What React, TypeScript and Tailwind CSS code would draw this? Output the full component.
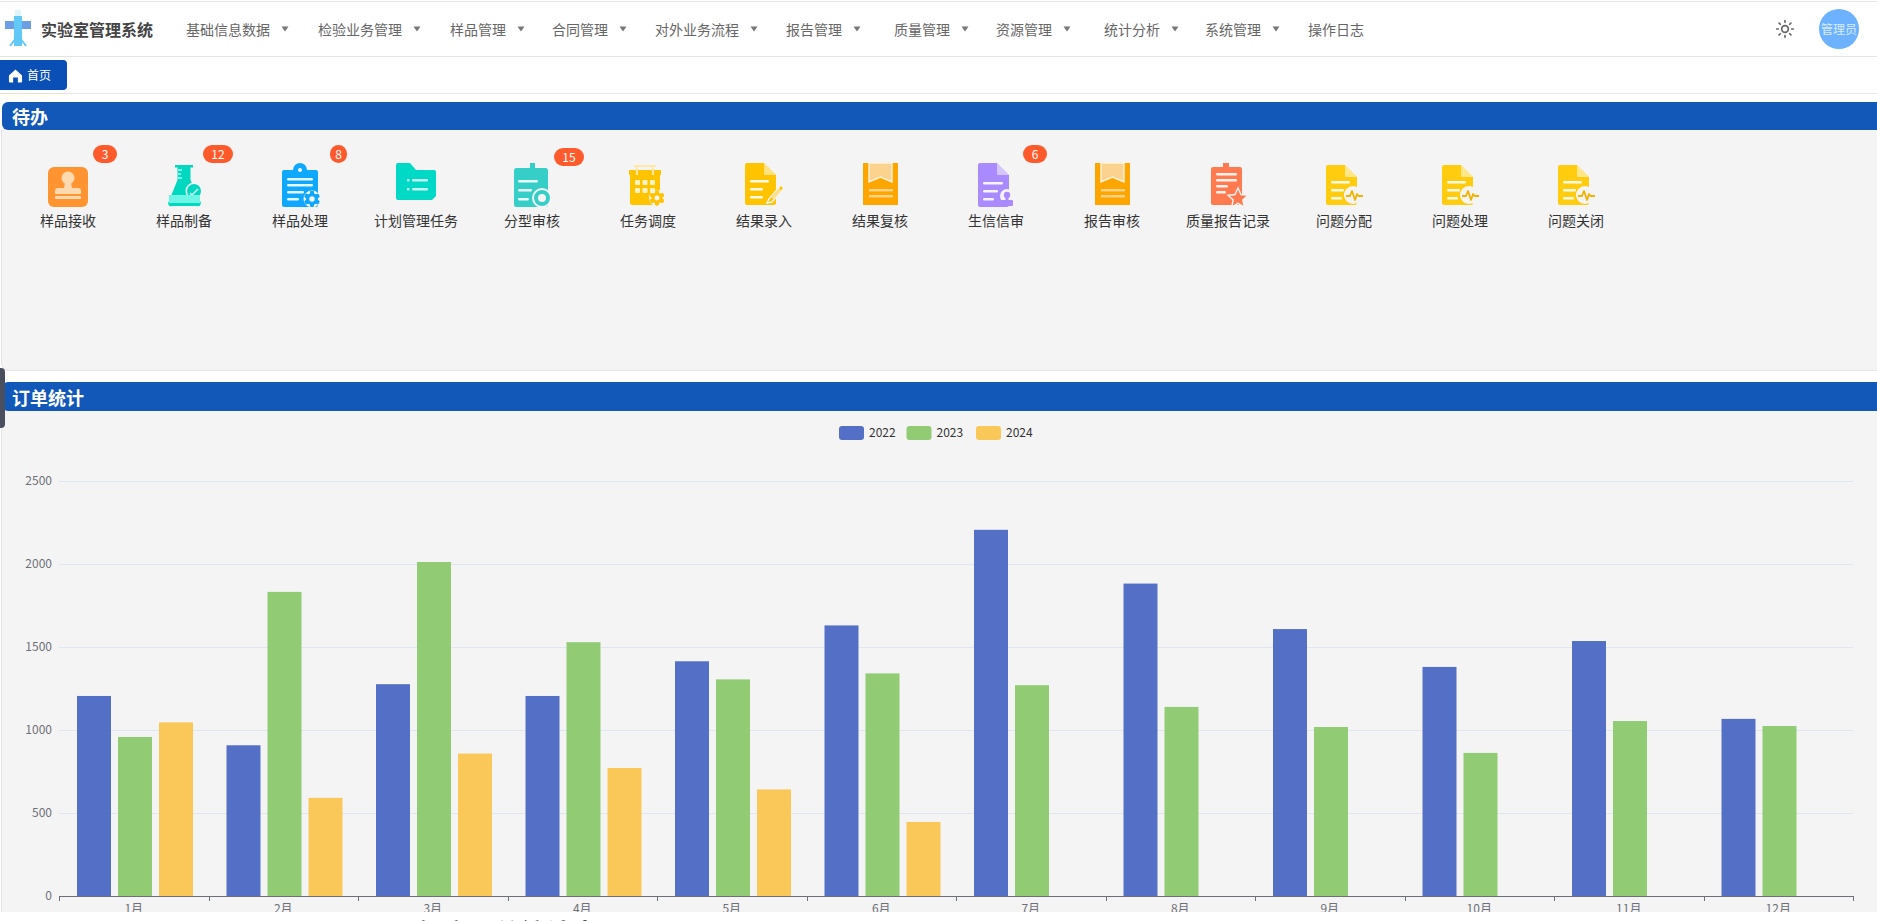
import React from "react";
import { Sun } from "lucide-react";

const FONT = '"Noto Sans CJK SC", "Noto Sans", sans-serif';

const NAV = [
  { label: "基础信息数据", caret: true, cls: "w-[132px]" },
  { label: "检验业务管理", caret: true, cls: "w-[132px]" },
  { label: "样品管理", caret: true, cls: "w-[102px]" },
  { label: "合同管理", caret: true, cls: "w-[103px]" },
  { label: "对外业务流程", caret: true, cls: "w-[131px]" },
  { label: "报告管理", caret: true, cls: "w-[108px]" },
  { label: "质量管理", caret: true, cls: "w-[102px]" },
  { label: "资源管理", caret: true, cls: "w-[108px]" },
  { label: "统计分析", caret: true, cls: "w-[101px]" },
  { label: "系统管理", caret: true, cls: "w-[103px]" },
  { label: "操作日志", caret: false, cls: "w-[60px]" },
];

function Caret() {
  return (
    <svg width="8" height="6" viewBox="0 0 8 6" className="ml-[11px]">
      <path d="M0.5 0.5h7L4 5.5z" fill="#777" />
    </svg>
  );
}

function DocBase({ color, x, y, w, h, fold = 12 }: { color: string; x: number; y: number; w: number; h: number; fold?: number }) {
  return (
    <>
      <path
        d={`M${x + 2} ${y}h${w - fold - 2}l${fold} ${fold}v${h - fold - 2}a2 2 0 0 1-2 2h-${w - 4}a2 2 0 0 1-2-2v-${h - 4}a2 2 0 0 1 2-2z`}
        fill={color}
      />
      <path d={`M${x + w - fold} ${y}l${fold} ${fold}h-${fold - 1}a1 1 0 0 1-1-1z`} fill="#fff" fillOpacity="0.5" />
    </>
  );
}

function Lines({ x, ys, ws }: { x: number; ys: number[]; ws: number[] }) {
  return (
    <>
      {ys.map((y, i) => (
        <rect key={y} x={x} y={y} width={ws[i]} height="2.4" rx="1.2" fill="#fff" fillOpacity="0.9" />
      ))}
    </>
  );
}

function Gear({ cx, cy, color, r = 6 }: { cx: number; cy: number; color: string; r?: number }) {
  const teeth = [0, 60, 120, 180, 240, 300];
  return (
    <g>
      <circle cx={cx} cy={cy} r={r + 2.5} fill="#f4f4f4" />
      {teeth.map((a) => (
        <rect key={a} x={cx - 2} y={cy - r - 2} width="4" height={r * 2 + 4} rx="1.4" fill={color} transform={`rotate(${a} ${cx} ${cy})`} />
      ))}
      <circle cx={cx} cy={cy} r={r} fill={color} />
      <circle cx={cx} cy={cy} r={r * 0.45} fill="#f4f4f4" />
    </g>
  );
}

function Pulse({ cx, cy, color }: { cx: number; cy: number; color: string }) {
  return (
    <g>
      <circle cx={cx - 1} cy={cy} r="9" fill="#f4f4f4" />
      <path d={`M${cx - 8} ${cy + 1}h4l2 -5l3 9l2 -6l1.5 2h4.5`} fill="none" stroke={color} strokeWidth="1.8" strokeLinejoin="round" />
    </g>
  );
}

// One drawing per task entry, all in a 48 x 48 box
const ICONS: Record<string, React.ReactNode> = {
  stamp: (
    <>
      <rect x="4" y="7" width="40" height="40" rx="6" fill="#ff9430" />
      <circle cx="24" cy="18" r="6.5" fill="#ffd9b0" />
      <path d="M21 22h6l1 6h6a3 3 0 0 1 3 3v3H11v-3a3 3 0 0 1 3-3h6z" fill="#ffd9b0" />
      <rect x="11" y="36" width="26" height="3" rx="1" fill="#ffd9b0" />
    </>
  ),
  flask: (
    <>
      <path d="M15 5h18v2.5h-2.500V20L40 41a3 3 0 0 1-3 5H12a3 3 0 0 1-3-5l8.500-21V7.500H15z" fill="#00d8c0" />
      <path d="M18 10h4M18 14h3M18 18h4" stroke="#b6f5ee" strokeWidth="1.300" />
      <circle cx="34" cy="31" r="8.500" fill="#f4f4f4" />
      <circle cx="34" cy="31" r="7" fill="#00d8c0" />
      <path d="M30 33l2 2l6 -6" fill="none" stroke="#d8fbf7" strokeWidth="1.500" />
      <rect x="9" y="35" width="31" height="8" fill="#6ff5e6" />
    </>
  ),
  clipboard: (
    <>
      <path d="M8 10h9a7 7 0 0 1 14 0h9a2 2 0 0 1 2 2v33a2 2 0 0 1-2 2H8a2 2 0 0 1-2-2V12a2 2 0 0 1 2-2z" fill="#0ea8ff" />
      <circle cx="24" cy="10" r="2" fill="#f4f4f4" />
      <Lines x={11} ys={[18, 24, 31, 38]} ws={[26, 26, 17, 12]} />
      <Gear cx={36} cy={39} color="#0ea8ff" />
    </>
  ),
  folder: (
    <>
      <path d="M6 3h12l6 7h18a2 2 0 0 1 2 2v24l-4 4H6a2 2 0 0 1-2-2V5a2 2 0 0 1 2-2z" fill="#00d9c5" />
      <rect x="15" y="19" width="2.400" height="2.400" fill="#c5f8f2" />
      <rect x="20" y="19" width="16" height="2.400" rx="1" fill="#c5f8f2" />
      <rect x="15" y="28" width="2.400" height="2.400" fill="#c5f8f2" />
      <rect x="20" y="28" width="16" height="2.400" rx="1" fill="#c5f8f2" />
    </>
  ),
  docChart: (
    <>
      <rect x="6" y="8" width="34" height="39" rx="2.500" fill="#35cfc8" />
      <path d="M16 8h6V3h5v5z" fill="#35cfc8" />
      <Lines x={10} ys={[20, 29, 38]} ws={[20, 14, 11]} />
      <circle cx="34" cy="38" r="10" fill="#f4f4f4" />
      <circle cx="34" cy="38" r="6" fill="none" stroke="#35cfc8" strokeWidth="4" />
    </>
  ),
  calendar: (
    <>
      <rect x="6" y="10" width="30" height="35" rx="2.500" fill="#ffc300" />
      <rect x="5" y="10" width="32" height="5" fill="#ffc300" />
      <path d="M13 5v10M29 5v10" stroke="#ffe9a8" strokeWidth="2.200" />
      <path d="M10 6h22" stroke="#ffe9a8" strokeWidth="2" />
      {[20, 28].flatMap((y) =>
        [11, 18.500, 26].map((x) => <rect key={`${x}-${y}`} x={x} y={y} width="5" height="5" rx="1" fill="#fff3c6" />)
      )}
      <Gear cx={33} cy={38} color="#ffc300" r={5.500} />
    </>
  ),
  pencil: (
    <>
      <DocBase color="#ffc300" x={5} y={3} w={31} h={42} />
      <Lines x={10} ys={[20, 28, 36]} ws={[19, 13, 13]} />
      <path d="M29 39l12 -14l3 3l-12 14l-5 1z" fill="#ffc300" stroke="#f4f4f4" strokeWidth="1.500" />
      <path d="M31 37l8 -9l2.500 2.500l-8 9z" fill="#ffe08a" />
    </>
  ),
  bookmark: (
    <>
      <rect x="7" y="3" width="35" height="42" fill="#ffa500" />
      <path d="M13 3h23v19l-11.500 -5L13 22z" fill="#fcd28f" stroke="#fff3dc" strokeWidth="1.400" />
      <rect x="13" y="29" width="24" height="2.400" fill="#ffd48c" />
      <rect x="13" y="35" width="24" height="2.400" fill="#ffd48c" />
    </>
  ),
  docStamp: (
    <>
      <DocBase color="#a98aff" x={6} y={3} w={31} h={44} />
      <Lines x={11} ys={[22, 30, 38]} ws={[20, 15, 11]} />
      <circle cx="35" cy="36" r="7" fill="#f4f4f4" />
      <circle cx="35" cy="35" r="3.200" fill="#a98aff" />
      <rect x="33.500" y="37" width="3" height="4" fill="#a98aff" />
      <rect x="29" y="40" width="12" height="6" rx="1" fill="#a98aff" />
    </>
  ),
  docStar: (
    <>
      <rect x="7" y="7" width="31" height="38" rx="2" fill="#ff7a4f" />
      <path d="M19 7V3h6v4z" fill="#ff7a4f" />
      <Lines x={12} ys={[13, 19, 25, 31]} ws={[21, 21, 12, 10]} />
      <path d="M34 28l3 6.500l7 .8l-5.200 4.700l1.500 7l-6.300 -3.600l-6.300 3.600l1.500 -7l-5.200 -4.700l7 -.8z" fill="#ff7a4f" stroke="#f4f4f4" strokeWidth="1.400" />
    </>
  ),
  docPulse: (
    <>
      <DocBase color="#ffcc10" x={6} y={5} w={31} h={40} />
      <Lines x={11} ys={[21, 29, 37]} ws={[19, 13, 11]} />
      <Pulse cx={34} cy={35} color="#f0b400" />
    </>
  ),
};

const TASKS = [
  { icon: "stamp", label: "样品接收", badge: "3", badgeCls: "left-[83px] -top-[15px] w-[24px]" },
  { icon: "flask", label: "样品制备", badge: "12", badgeCls: "left-[77px] -top-[15px] w-[30px]" },
  { icon: "clipboard", label: "样品处理", badge: "8", badgeCls: "left-[88px] -top-[15px] w-[17px]" },
  { icon: "folder", label: "计划管理任务", labelCls: "-mt-[4px]" },
  { icon: "docChart", label: "分型审核", badge: "15", badgeCls: "left-[80px] -top-[12px] w-[30px]" },
  { icon: "calendar", label: "任务调度" },
  { icon: "pencil", label: "结果录入" },
  { icon: "bookmark", label: "结果复核" },
  { icon: "docStamp", label: "生信信审", badge: "6", badgeCls: "left-[85px] -top-[15px] w-[24px]", labelCls: "mt-[2px]" },
  { icon: "bookmark", label: "报告审核" },
  { icon: "docStar", label: "质量报告记录" },
  { icon: "docPulse", label: "问题分配" },
  { icon: "docPulse", label: "问题处理" },
  { icon: "docPulse", label: "问题关闭" },
];

const MONTHS = ["1月", "2月", "3月", "4月", "5月", "6月", "7月", "8月", "9月", "10月", "11月", "12月"];
const SERIES = [
  { name: "2022", color: "#5470c6", data: [1205, 908, 1276, 1205, 1414, 1630, 2206, 1882, 1608, 1380, 1536, 1067] },
  { name: "2023", color: "#91cc75", data: [958, 1832, 2012, 1529, 1305, 1341, 1270, 1139, 1018, 862, 1054, 1024] },
  { name: "2024", color: "#fac858", data: [1046, 591, 858, 771, 642, 446] },
];

const AXIS_Y = 896;
const LEFT = 59;
const RIGHT = 1853;
const STEP = (RIGHT - LEFT) / 12;
const PX_PER_UNIT = 83 / 500;

function OrderChart() {
  const legendX = [839, 906.500, 976];
  return (
    <svg width="1877" height="501" viewBox="0 411 1877 501" className="block" style={{ fontFamily: FONT }}>
      {[500, 1000, 1500, 2000, 2500].map((v) => {
        const y = AXIS_Y - v * PX_PER_UNIT;
        return <line key={v} x1={LEFT} x2={RIGHT} y1={y + 0.5} y2={y + 0.5} stroke="#e0e6f1" />;
      })}
      {[0, 500, 1000, 1500, 2000, 2500].map((v) => (
        <text key={v} x="52" y={AXIS_Y - v * PX_PER_UNIT + 4} textAnchor="end" fontSize="12" fill="#6e7079">
          {v}
        </text>
      ))}
      {SERIES.map((s, k) =>
        s.data.map((v, i) => {
          const h = v * PX_PER_UNIT;
          return <rect key={`${k}-${i}`} x={LEFT + i * STEP + 18 + k * 41} y={AXIS_Y - h} width="34" height={h} fill={s.color} />;
        })
      )}
      <line x1={LEFT} x2={RIGHT} y1={AXIS_Y + 0.5} y2={AXIS_Y + 0.5} stroke="#6e7079" />
      {Array.from({ length: 13 }, (_, i) => (
        <line key={i} x1={Math.round(LEFT + i * STEP) + 0.5} x2={Math.round(LEFT + i * STEP) + 0.5} y1={AXIS_Y} y2={AXIS_Y + 5} stroke="#6e7079" />
      ))}
      {MONTHS.map((m, i) => (
        <text key={m} x={LEFT + (i + 0.5) * STEP} y="913" textAnchor="middle" fontSize="12" fill="#6e7079">
          {m}
        </text>
      ))}
      {SERIES.map((s, k) => (
        <g key={s.name}>
          <rect x={legendX[k]} y="426" width="25" height="14" rx="3" fill={s.color} />
          <text x={legendX[k] + 30} y="437" fontSize="12" fill="#333">
            {s.name}
          </text>
        </g>
      ))}
    </svg>
  );
}

function SectionBar({ title, cls }: { title: string; cls: string }) {
  return (
    <div className={`ml-[2px] flex items-center rounded-l-md bg-[#1158b9] pl-[10px] text-[18px] leading-none font-bold text-white ${cls}`}>
      {title}
    </div>
  );
}

export default function App() {
  return (
    <div className="relative h-[921px] w-[1877px] overflow-hidden bg-white" style={{ fontFamily: FONT }}>
      <div className="h-px" />
      <header className="flex h-[56px] items-center border-t border-b border-[#e5e5e5]">
        <svg width="26" height="38" viewBox="0 0 26 38" className="ml-[5px]">
          <rect x="10" y="0" width="6" height="6" fill="#dff3fb" />
          <rect x="0" y="11" width="26" height="8" fill="#6d9fe6" />
          <rect x="9" y="6" width="8" height="30" fill="#62c8f6" />
          <path d="M5 36l6 -8M21 36l-6 -8" stroke="#62c8f6" strokeWidth="2" />
        </svg>
        <span className="ml-[10px] w-[145px] text-[16px] font-bold text-[#444]">实验室管理系统</span>
        <nav className="flex items-center text-[14px] text-[#666]">
          {NAV.map((item) => (
            <div key={item.label} className={`flex items-center ${item.cls}`}>
              <span className="whitespace-nowrap">{item.label}</span>
              {item.caret && <Caret />}
            </div>
          ))}
        </nav>
        <div className="ml-auto flex items-center">
          <Sun size={20} color="#666" strokeWidth={2} />
          <div className="mr-[18px] ml-[24px] flex h-[40px] w-[40px] items-center justify-center rounded-full bg-[#6cb2ff] text-[12px] whitespace-nowrap text-[#dbeaff]">
            管理员
          </div>
        </div>
      </header>
      <div className="flex h-[37px] items-start border-b border-[#e5e5e5] pt-[3px]">
        <div className="flex h-[30px] w-[67px] items-center rounded-r bg-[#0a4fb5] pl-[8px] text-[12px] text-white">
          <svg width="15" height="15" viewBox="0 0 16 16" className="mr-[4px]">
            <path d="M8 1.500L15 8v6.500a1 1 0 0 1-1 1h-3.500V10h-5v5.500H2a1 1 0 0 1-1-1V8z" fill="#fff" />
          </svg>
          首页
        </div>
      </div>

      <section className="mt-[8px]">
        <SectionBar title="待办" cls="h-[28px]" />
        <div className="ml-px h-[241px] rounded-bl-lg border-b border-l border-[#e5e5e5] bg-[#f4f4f4] pt-[30px] pl-[8px]">
          <div className="grid grid-cols-[repeat(14,116px)]">
            {TASKS.map((t, i) => (
              <div key={i} className="relative flex flex-col items-center">
                <svg width="48" height="48" viewBox="0 0 48 48" className="overflow-visible">
                  {ICONS[t.icon]}
                </svg>
                <span className={`mt-[4px] text-[14px] leading-[16px] whitespace-nowrap text-[#333] ${t.labelCls ?? ""}`}>{t.label}</span>
                {t.badge && (
                  <span className={`absolute flex h-[18px] items-center justify-center rounded-full bg-[#ff5a2b] text-[12px] leading-none text-white ${t.badgeCls}`}>
                    {t.badge}
                  </span>
                )}
              </div>
            ))}
          </div>
        </div>
      </section>

      <section className="mt-[11px]">
        <SectionBar title="订单统计" cls="h-[29px]" />
        <div className="ml-px h-[501px] overflow-hidden border-l border-[#e5e5e5] bg-[#f4f4f4]">
          <div className="-ml-[2px]">
            <OrderChart />
          </div>
        </div>
      </section>
      <div className="mt-[7px] pl-[416px] text-[26px] leading-none font-bold whitespace-nowrap text-[#222]">年度订单统计表</div>

      {/* collapsed side drawer handle */}
      <div className="absolute top-[368px] left-0 h-[60px] w-[5px] rounded-r bg-[#4a4f5f]" />
    </div>
  );
}
